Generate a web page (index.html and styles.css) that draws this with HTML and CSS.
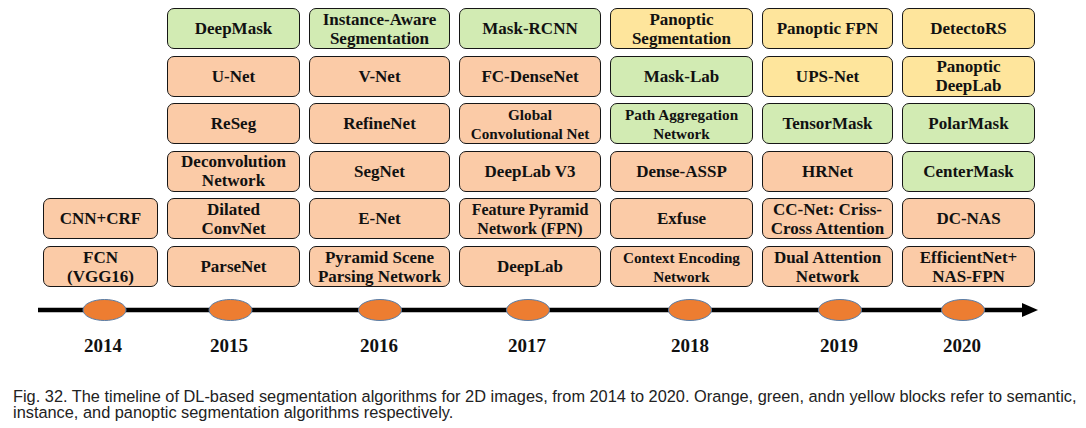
FILE: index.html
```html
<!DOCTYPE html>
<html lang="en">
<head>
<meta charset="utf-8">
<title>Timeline of DL-based segmentation algorithms</title>
<link rel="stylesheet" href="styles.css">
</head>
<body>
<div class="fig">
  <div class="grid">
    <div class="col">
      <div class="box sem">CNN+CRF</div>
      <div class="box sem">FCN<br>(VGG16)</div>
    </div>
    <div class="col">
      <div class="box ins">DeepMask</div>
      <div class="box sem">U-Net</div>
      <div class="box sem">ReSeg</div>
      <div class="box sem">Deconvolution<br>Network</div>
      <div class="box sem">Dilated<br>ConvNet</div>
      <div class="box sem">ParseNet</div>
    </div>
    <div class="col">
      <div class="box ins">Instance-Aware<br>Segmentation</div>
      <div class="box sem">V-Net</div>
      <div class="box sem">RefineNet</div>
      <div class="box sem">SegNet</div>
      <div class="box sem">E-Net</div>
      <div class="box sem">Pyramid Scene<br>Parsing Network</div>
    </div>
    <div class="col">
      <div class="box ins">Mask-RCNN</div>
      <div class="box sem">FC-DenseNet</div>
      <div class="box sem s15">Global<br>Convolutional Net</div>
      <div class="box sem">DeepLab V3</div>
      <div class="box sem s16">Feature Pyramid<br>Network (FPN)</div>
      <div class="box sem">DeepLab</div>
    </div>
    <div class="col">
      <div class="box pan">Panoptic<br>Segmentation</div>
      <div class="box ins">Mask-Lab</div>
      <div class="box ins s15">Path Aggregation<br>Network</div>
      <div class="box sem">Dense-ASSP</div>
      <div class="box sem">Exfuse</div>
      <div class="box sem s15">Context Encoding<br>Network</div>
    </div>
    <div class="col">
      <div class="box pan">Panoptic FPN</div>
      <div class="box pan">UPS-Net</div>
      <div class="box ins">TensorMask</div>
      <div class="box sem">HRNet</div>
      <div class="box sem">CC-Net: Criss-<br>Cross Attention</div>
      <div class="box sem">Dual Attention<br>Network</div>
    </div>
    <div class="col">
      <div class="box pan">DetectoRS</div>
      <div class="box pan">Panoptic<br>DeepLab</div>
      <div class="box ins">PolarMask</div>
      <div class="box ins">CenterMask</div>
      <div class="box sem">DC-NAS</div>
      <div class="box sem">EfficientNet+<br>NAS-FPN</div>
    </div>
  </div>

  <svg class="timeline" width="1086" height="75" viewBox="0 0 1086 75">
    <line x1="38" y1="23" x2="1026" y2="23" stroke="#000" stroke-width="4.5"/>
    <polygon points="1022,16 1038,23 1022,30" fill="#000"/>
    <g fill="#ed7d31" stroke="#5a7ea8" stroke-width="1">
      <ellipse cx="104.5" cy="23" rx="21.5" ry="10.5"/>
      <ellipse cx="230.5" cy="23" rx="21.5" ry="10.5"/>
      <ellipse cx="380" cy="23" rx="21.5" ry="10.5"/>
      <ellipse cx="528" cy="23" rx="21.5" ry="10.5"/>
      <ellipse cx="690" cy="23" rx="21.5" ry="10.5"/>
      <ellipse cx="840" cy="23" rx="21.5" ry="10.5"/>
      <ellipse cx="963" cy="23" rx="21.5" ry="10.5"/>
    </g>
    <g class="years" text-anchor="middle">
      <text x="103" y="65">2014</text>
      <text x="229" y="65">2015</text>
      <text x="379" y="65">2016</text>
      <text x="527" y="65">2017</text>
      <text x="690" y="65">2018</text>
      <text x="839" y="65">2019</text>
      <text x="962" y="65">2020</text>
    </g>
  </svg>

  <p class="caption">Fig. 32. The timeline of DL-based segmentation algorithms for 2D images, from 2014 to 2020. Orange, green, andn yellow blocks refer to semantic,<br>instance, and panoptic segmentation algorithms respectively.</p>
</div>
</body>
</html>
```

FILE: styles.css
```css
html, body {
  margin: 0;
  padding: 0;
  background: #ffffff;
}

.fig {
  width: 1086px;
  height: 428px;
  overflow: hidden;
}

.grid {
  display: grid;
  grid-template-columns: 115px 133px 141px 142px 143px 131px 133px;
  column-gap: 9px;
  margin: 8px 0 0 43px;
  height: 279px;
}

.col {
  display: flex;
  flex-direction: column;
  justify-content: flex-end;
  gap: 6.6px;
}

.box {
  box-sizing: border-box;
  height: 41px;
  border: 1.8px solid #161616;
  border-radius: 7px;
  display: flex;
  align-items: center;
  justify-content: center;
  text-align: center;
  font-family: "Liberation Serif", "Times New Roman", serif;
  font-weight: bold;
  font-size: 17px;
  line-height: 19px;
  color: #111;
  white-space: nowrap;
  overflow: visible;
}

.sem { background: #fbcba7; }
.ins { background: #d2ebb3; }
.pan { background: #fee59c; }

.s15 { font-size: 15.2px; }
.s16 { font-size: 16px; }

.timeline {
  display: block;
}

.years text {
  font-family: "Liberation Serif", "Times New Roman", serif;
  font-weight: bold;
  font-size: 19px;
  fill: #111;
}

.caption {
  margin: 26px 0 0 13px;
  font-family: "Liberation Sans", Arial, sans-serif;
  font-size: 16.35px;
  line-height: 16px;
  color: #222;
  white-space: nowrap;
}
```
